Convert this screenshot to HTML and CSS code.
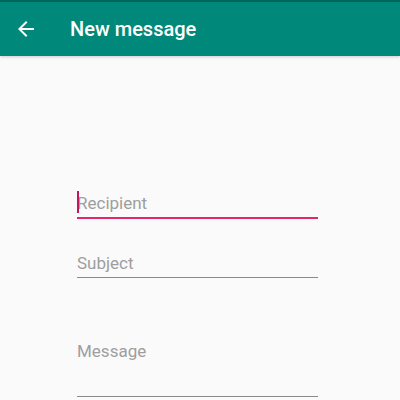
FILE: index.html
```html
<!DOCTYPE html>
<html>
<head>
<meta charset="utf-8">
<link rel="stylesheet" href="styles.css">
</head>
<body>
<div class="status"></div>
<header class="toolbar">
  <svg class="back" width="24" height="24" viewBox="0 0 24 24"><path d="M20 11H7.83l5.59-5.59L12 4l-8 8 8 8 1.41-1.41L7.83 13H20v-2z" fill="#fff"/></svg>
  <span class="title">New message</span>
</header>
<main class="form">
  <div class="field focused"><span class="caret"></span><span class="ph">Recipient</span></div>
  <div class="field"><span class="ph">Subject</span></div>
  <div class="field message"><span class="ph">Message</span></div>
</main>
</body>
</html>
```
FILE: styles.css
```css
html, body { margin: 0; padding: 0; }
body { width: 400px; height: 400px; overflow: hidden; background: #fafafa; font-family: Roboto, "Noto Sans", sans-serif; }
.status { height: 2px; background: #00695c; }
.toolbar { height: 54px; background: #00897b; display: flex; align-items: center; box-shadow: 0 1px 3px rgba(0,0,0,0.18); position: relative; }
.back { margin-left: 14px; width: 24px; height: 24px; }
.title { margin-left: 32px; color: #fff; font-size: 20px; font-weight: 500; }
.form { padding: 134px 0 0 77px; width: 241px; }
.field { position: relative; height: 24px; border-bottom: 1px solid #8a8a8a; display: flex; align-items: flex-end; padding-bottom: 4px; margin-bottom: 31px; }
.field.focused { border-bottom: 2px solid #e5266a; height: 23px; margin-bottom: 30px; }
.field.message { height: 55px; align-items: flex-start; padding: 0; margin-top: 63px; margin-bottom: 0; }
.ph { color: #9e9e9e; font-size: 17px; line-height: 20px; }
.caret { position: absolute; left: 0; top: 1px; width: 2px; height: 22px; background: #c2185b; }
```
